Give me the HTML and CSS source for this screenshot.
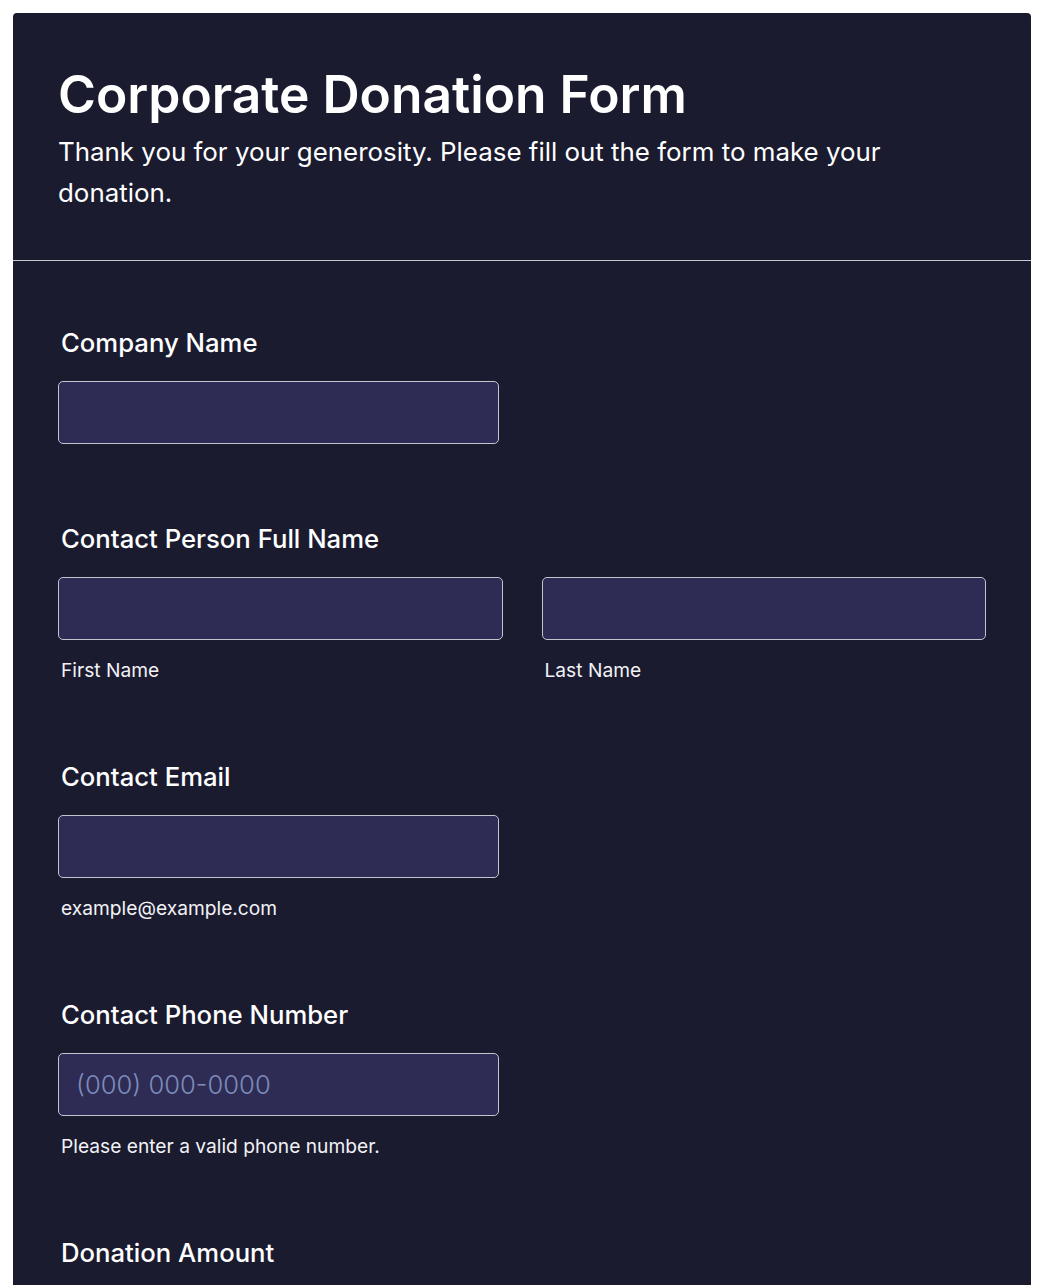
FILE: index.html
```html
<!DOCTYPE html>
<html lang="en">
<head>
    <meta charset="UTF-8">
    <meta name="viewport" content="width=device-width, initial-scale=1.0">
    <title>Corporate Donation Form</title>
    <link rel="stylesheet" href="styles.css">
</head>
<body>
    <div class="form-card">
        <div class="form-header">
            <h1>Corporate Donation Form</h1>
            <p>Thank you for your generosity. Please fill out the form to make your donation.</p>
        </div>
        <form class="form-body">
            <div class="field field-single">
                <label class="field-label" for="company">Company Name</label>
                <input type="text" id="company">
            </div>
            <div class="field">
                <label class="field-label" for="first">Contact Person Full Name</label>
                <div class="field-row">
                    <div class="field-col">
                        <input type="text" id="first">
                        <span class="sublabel">First Name</span>
                    </div>
                    <div class="field-col">
                        <input type="text" id="last">
                        <span class="sublabel">Last Name</span>
                    </div>
                </div>
            </div>
            <div class="field">
                <label class="field-label" for="email">Contact Email</label>
                <input type="email" id="email">
                <span class="sublabel">example@example.com</span>
            </div>
            <div class="field">
                <label class="field-label" for="phone">Contact Phone Number</label>
                <input type="tel" id="phone" placeholder="(000) 000-0000">
                <span class="sublabel">Please enter a valid phone number.</span>
            </div>
            <div class="field">
                <label class="field-label" for="amount">Donation Amount</label>
                <input type="text" id="amount">
            </div>
        </form>
    </div>
</body>
</html>
```
FILE: styles.css
```css
body {
    margin: 0;
    padding: 13px 13px 0;
    background-color: #ffffff;
    font-family: Inter, "Noto Sans", sans-serif;
    color: #ffffff;
}
.form-card {
    background-color: #1b1b2f;
    border-radius: 4px 4px 0 0;
    padding-bottom: 120px;
}
.form-header {
    padding: 50px 45px 47px;
    border-bottom: 1px solid #c8c8d2;
}
.form-header h1 {
    margin: 0;
    font-size: 51.5px;
    font-weight: 600;
    line-height: 62px;
}
.form-header p {
    margin: 6px 0 0;
    font-size: 25.9px;
    line-height: 41px;
}
.form-body {
    padding: 64px 45px 0;
}
.field {
    margin-bottom: 75px;
}
.field-single {
    margin-bottom: 77px;
}
.field-label {
    display: block;
    padding-left: 3px;
    font-size: 25.7px;
    font-weight: 500;
    line-height: 36px;
    margin-bottom: 20px;
}
.field-row {
    display: flex;
    gap: 39px;
}
.field-col {
    flex: 1;
}
.field input {
    display: block;
    box-sizing: border-box;
    width: 441px;
    height: 63px;
    padding: 0 17px;
    border: 1px solid #c4c4d0;
    border-radius: 5px;
    background-color: #2e2b55;
    color: #ffffff;
    font-family: Inter, sans-serif;
    font-size: 25.6px;
    font-weight: 300;
    outline: none;
}
.field-row input {
    width: 100%;
}
.field input::placeholder {
    color: #7d8cb9;
}
.sublabel {
    display: block;
    padding-left: 3px;
    margin-top: 17px;
    font-size: 19.2px;
    line-height: 27px;
    color: #f2f2f6;
}
```
